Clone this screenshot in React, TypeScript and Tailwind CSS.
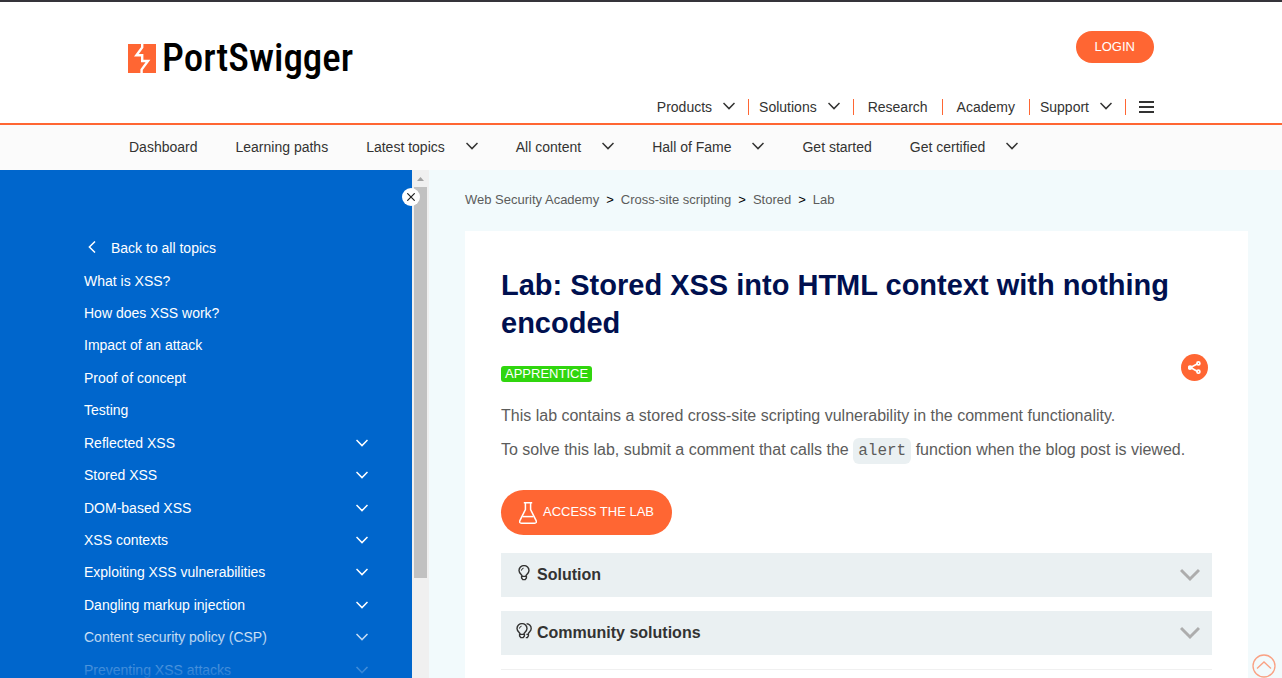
import React from "react";

type NavItem = { label: string; menu?: boolean };

const topNav: NavItem[] = [
  { label: "Products", menu: true },
  { label: "Solutions", menu: true },
  { label: "Research" },
  { label: "Academy" },
  { label: "Support", menu: true },
];

const academyNav: NavItem[] = [
  { label: "Dashboard" },
  { label: "Learning paths" },
  { label: "Latest topics", menu: true },
  { label: "All content", menu: true },
  { label: "Hall of Fame", menu: true },
  { label: "Get started" },
  { label: "Get certified", menu: true },
];

const topics: NavItem[] = [
  { label: "What is XSS?" },
  { label: "How does XSS work?" },
  { label: "Impact of an attack" },
  { label: "Proof of concept" },
  { label: "Testing" },
  { label: "Reflected XSS", menu: true },
  { label: "Stored XSS", menu: true },
  { label: "DOM-based XSS", menu: true },
  { label: "XSS contexts", menu: true },
  { label: "Exploiting XSS vulnerabilities", menu: true },
  { label: "Dangling markup injection", menu: true },
  { label: "Content security policy (CSP)", menu: true },
  { label: "Preventing XSS attacks", menu: true },
];

const crumbs = ["Web Security Academy", "Cross-site scripting", "Stored", "Lab"];

function Chevron({ className = "" }: { className?: string }) {
  return (
    <svg className={`h-3 w-3 shrink-0 ${className}`} viewBox="0 0 12 12" fill="none" stroke="currentColor" strokeWidth="1.5" aria-hidden="true">
      <path d="M0.5 3 L6 8.6 L11.5 3" />
    </svg>
  );
}

function Logo() {
  return (
    <a href="#" className="flex items-center gap-1.5 text-black">
      <svg className="h-[29px] w-7" viewBox="0 0 28 29" aria-hidden="true">
        <rect width="28" height="29" fill="#ff6633" />
        <path
          d="M14.2 0V3.4L8.4 11.2H14.2V17H20L13.6 25.6V29"
          fill="none"
          stroke="#fff"
          strokeWidth="2.4"
        />
      </svg>
      <span className="font-['Roboto_Condensed','Roboto',sans-serif] text-[39px] leading-10 font-medium">PortSwigger</span>
    </a>
  );
}

function Bulb({ double = false }: { double?: boolean }) {
  return (
    <svg className="h-4 w-4 shrink-0" viewBox="0 0 16 16" fill="none" stroke="#333332" strokeWidth="1.4" aria-hidden="true">
      <g transform={double ? "translate(-2 0)" : "translate(0 0)"}>
        <path d="M6 11.4V10.6C5.6 9.4 3 8.2 3 5.6A5 5 0 0 1 13 5.6C13 8.2 10.4 9.4 10 10.6V11.4" />
        <path d="M5.6 11.4H10.4V13L9.2 14.6H6.8L5.6 13Z" />
        <path d="M5.4 5.6A2.6 2.6 0 0 1 7.6 3.2" strokeWidth="1" />
      </g>
      {double && <path d="M10.6 0.8A4.8 4.8 0 0 1 15.2 5.8C15.2 8.2 12.8 9.2 12.4 10.6V12.8L11.4 14.6H9.8M12.4 11.4H10.4" />}
    </svg>
  );
}

function Panel({ title, double }: { title: string; double?: boolean }) {
  return (
    <button type="button" className="flex h-11 w-full items-center bg-[#eaf0f2] px-[15px] text-left">
      <span className="pb-1">
        <Bulb double={double} />
      </span>
      <span className="ml-[5px] flex-1 text-base font-bold text-[#333332]">{title}</span>
      <svg className="mr-[-3px] h-[14px] w-5" viewBox="0 0 20 14" fill="none" stroke="#adadad" strokeWidth="3" aria-hidden="true">
        <path d="M1 2 L10 11 L19 2" />
      </svg>
    </button>
  );
}

export default function App() {
  return (
    <div className="flex h-screen flex-col overflow-hidden bg-white font-['Liberation_Sans',Arial,sans-serif] text-sm text-[#333332]">
      <header className="flex shrink-0 justify-between border-t-2 border-b-2 border-t-[#35343a] border-b-[#ff6633] px-32">
        <div className="pt-9 pb-3">
          <Logo />
        </div>
        <div className="flex flex-col items-end pt-[29px] pb-1.5">
          <a href="#" className="flex h-8 items-center rounded-full bg-[#ff6633] px-[19px] text-[13px] text-white">
            LOGIN
          </a>
          <nav className="mt-[34px] flex h-5 items-center" aria-label="Main">
            {topNav.map((item) =>
              item.menu ? (
                <button key={item.label} type="button" className="flex h-4 items-center gap-[11px] border-r border-[#ff6633] pr-[13px] pl-[10px]">
                  {item.label}
                  <Chevron className="mb-0.5" />
                </button>
              ) : (
                <a key={item.label} href="#" className="flex h-4 items-center border-r border-[#ff6633] px-[14px]">
                  {item.label}
                </a>
              ),
            )}
            <button type="button" aria-label="Menu" className="ml-[13px]">
              <svg className="h-3 w-[15px]" viewBox="0 0 15 12" fill="#333332" aria-hidden="true">
                <path d="M0 0H15V2H0Z M0 5H15V7H0Z M0 10H15V12H0Z" />
              </svg>
            </button>
          </nav>
        </div>
      </header>

      <nav className="flex h-[45px] shrink-0 items-center gap-[38px] bg-[#fbfbfb] px-[129px] pb-0.5" aria-label="Academy">
        {academyNav.map((item) =>
          item.menu ? (
            <button key={item.label} type="button" className="flex items-center gap-[21px] whitespace-nowrap">
              {item.label}
              <Chevron className="mb-0.5" />
            </button>
          ) : (
            <a key={item.label} href="#" className="whitespace-nowrap">
              {item.label}
            </a>
          ),
        )}
      </nav>

      <div className="flex min-h-0 flex-1">
        <aside className="relative flex shrink-0">
          <div className="relative w-[412px] overflow-hidden bg-[#0066cc] pt-[62px] pr-11 pl-[84px] text-white">
            <ul className="grid h-[454px] auto-rows-fr">
              <li className="flex items-center">
                <a href="#" className="flex items-center gap-[13px] pl-0.5">
                  <Chevron className="mb-0.5 rotate-90" />
                  Back to all topics
                </a>
              </li>
              {topics.map((topic) => (
                <li key={topic.label} className="flex items-center justify-between">
                  <a href="#">{topic.label}</a>
                  {topic.menu && (
                    <button type="button" aria-label={`Expand ${topic.label}`}>
                      <Chevron />
                    </button>
                  )}
                </li>
              ))}
            </ul>
            <div className="pointer-events-none absolute inset-x-0 bottom-0 h-14 bg-linear-to-b from-[#0066cc]/0 to-[#0066cc]/90" />
          </div>
          <div className="flex w-[17px] flex-col items-center bg-[#f0f0f0]" aria-hidden="true">
            <svg className="h-[17px] w-[17px] shrink-0" viewBox="0 0 17 17">
              <path d="M5 11L8.5 7L12 11Z" fill="#a3a3a3" />
            </svg>
            <div className="h-[77%] w-[13px] bg-[#c1c1c1]" />
          </div>
          <button type="button" aria-label="Close" className="absolute top-[18px] right-[9px] flex h-[18px] w-[18px] items-center justify-center rounded-full bg-white">
            <svg className="h-2 w-2" viewBox="0 0 8 8" stroke="#222" strokeWidth="1.2" aria-hidden="true">
              <path d="M0.3 0.3L7.7 7.7M7.7 0.3L0.3 7.7" />
            </svg>
          </button>
        </aside>

        <main className="min-w-0 flex-1 overflow-hidden bg-[#f2fafc] pr-[34px] pl-9">
          <nav className="flex h-[61px] items-center text-[13px] text-[#5c5c5b]" aria-label="Breadcrumb">
            <ol className="flex">
              {crumbs.map((crumb, i) => (
                <li key={crumb} className="flex">
                  {i > 0 && <span className="px-[7px] text-black">&gt;</span>}
                  <a href="#">{crumb}</a>
                </li>
              ))}
            </ol>
          </nav>

          <article className="h-full bg-white px-9 pt-[35px]">
            <h1 className="text-[29px] leading-[38px] font-bold text-[#00104f]">
              Lab: Stored XSS into HTML context with nothing encoded
            </h1>
            <div className="mt-[11px] flex h-7 items-center justify-between pr-1">
              <span className="mt-3.5 rounded-[3px] bg-[#30d60e] px-1 text-[13px] leading-4 text-white">APPRENTICE</span>
              <button type="button" aria-label="Share" className="flex h-[27px] w-[27px] items-center justify-center rounded-full bg-[#ff6633]">
                <svg className="h-[13px] w-[13px]" viewBox="0 0 13 13" fill="none" stroke="#fff" strokeWidth="1.7" aria-hidden="true">
                  <path d="M10 2.5L2.5 6.5L10 10.8" />
                  <circle cx="10.4" cy="2.4" r="1.5" />
                  <circle cx="10.4" cy="10.7" r="1.5" />
                  <circle cx="2.2" cy="6.6" r="1.5" fill="#fff" />
                </svg>
              </button>
            </div>
            <p className="mt-[23px] text-base leading-6 text-[#5c5c5b]">
              This lab contains a stored cross-site scripting vulnerability in the comment functionality.
            </p>
            <p className="mt-[10px] text-base leading-6 text-[#5c5c5b]">
              To solve this lab, submit a comment that calls the{" "}
              <code className="rounded-md bg-[#eaf0f2] px-[5px] py-1 font-['Liberation_Mono',monospace] text-base">alert</code>{" "}
              function when the blog post is viewed.
            </p>
            <a href="#" className="mt-[27px] flex h-[45px] w-fit items-center gap-[6px] rounded-full bg-[#ff6633] px-[18px] text-[13px] text-white">
              <svg className="h-[22px] w-[18px]" viewBox="0 0 18 22" fill="none" stroke="#fff" strokeWidth="1.5" aria-hidden="true">
                <path d="M4.8 0.8H13.2M6.4 0.8V7.6L1 18.4C0.2 20.2 0.8 21.2 2.4 21.2H15.6C17.2 21.2 17.8 20.2 17 18.4L11.6 7.6V0.8" />
                <path d="M3.6 14.6H14.4" />
              </svg>
              ACCESS THE LAB
            </a>
            <div className="mt-[18px] flex flex-col gap-[14px] border-b border-[#f0f0f0] pb-[14px]">
              <Panel title="Solution" />
              <Panel title="Community solutions" double />
            </div>
          </article>
        </main>
      </div>

      <button type="button" aria-label="Back to top" className="fixed right-1.5 bottom-0 text-[#ff6633] opacity-60">
        <svg className="h-6 w-6" viewBox="0 0 24 24" fill="none" stroke="currentColor" strokeWidth="1.3" aria-hidden="true">
          <circle cx="12" cy="12" r="11" />
          <path d="M5 14.5L12 8L19 14.5" />
        </svg>
      </button>
    </div>
  );
}
